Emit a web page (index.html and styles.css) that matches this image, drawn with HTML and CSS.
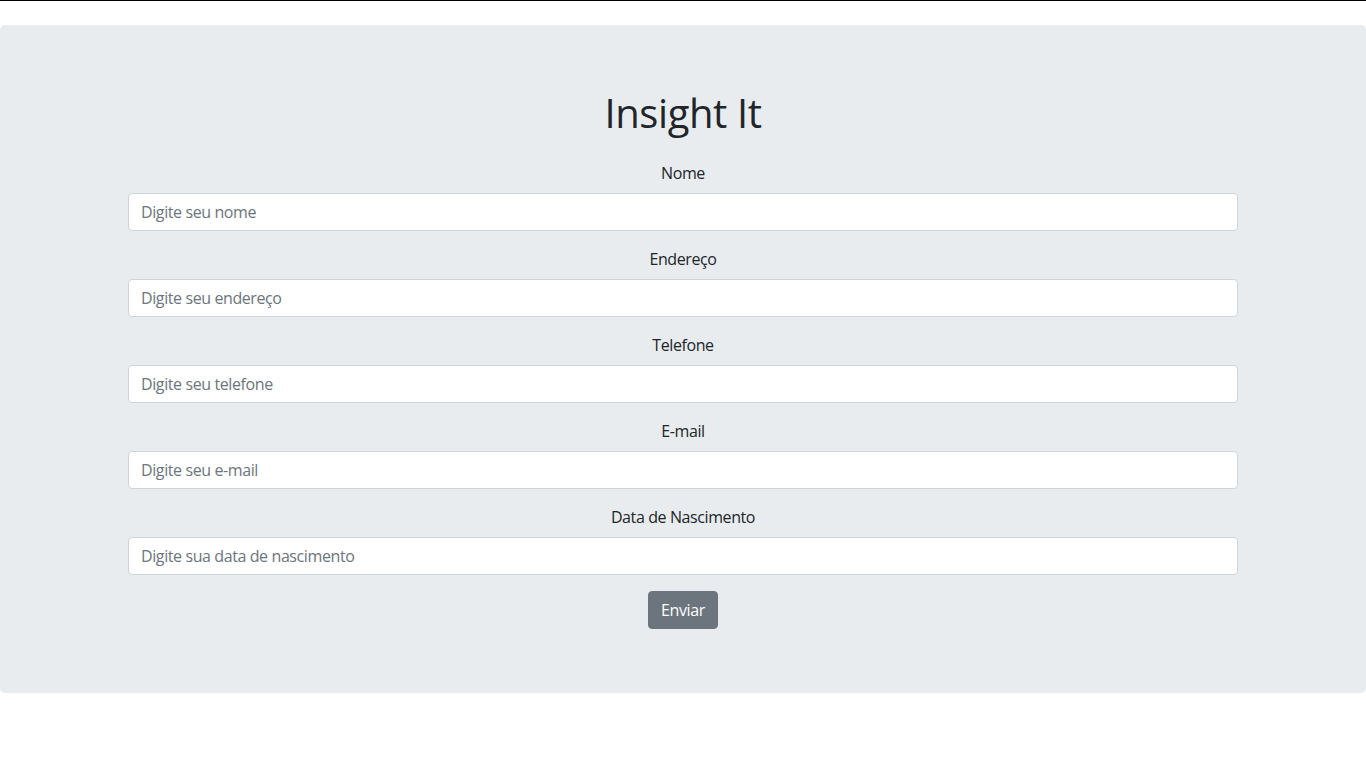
FILE: index.html
```html
<!DOCTYPE html>
<html lang="pt-BR">
<head>
<meta charset="utf-8">
<title>Insight It</title>
<link rel="stylesheet" href="styles.css">
</head>
<body>
<div class="topline"></div>
<main class="jumbotron">
  <div class="container">
    <h1 class="title">Insight It</h1>
    <form class="form">
      <div class="form-group">
        <label for="nome">Nome</label>
        <input id="nome" type="text" placeholder="Digite seu nome">
      </div>
      <div class="form-group">
        <label for="endereco">Endereço</label>
        <input id="endereco" type="text" placeholder="Digite seu endereço">
      </div>
      <div class="form-group">
        <label for="telefone">Telefone</label>
        <input id="telefone" type="text" placeholder="Digite seu telefone">
      </div>
      <div class="form-group">
        <label for="email">E-mail</label>
        <input id="email" type="text" placeholder="Digite seu e-mail">
      </div>
      <div class="form-group">
        <label for="nasc">Data de Nascimento</label>
        <input id="nasc" type="text" placeholder="Digite sua data de nascimento">
      </div>
      <div class="actions">
        <button type="button" class="btn">Enviar</button>
      </div>
    </form>
  </div>
</main>
</body>
</html>
```
FILE: styles.css
```css
* { box-sizing: border-box; }
html, body { margin: 0; padding: 0; }
body {
  font-family: "Open Sans", "Noto Sans", sans-serif;
  font-size: 16px;
  line-height: 1.5;
  letter-spacing: -0.4px;
  color: #212529;
  background: #fff;
}
.topline {
  height: 1px;
  background: #000;
  margin-bottom: 24px;
}
.jumbotron {
  background: #e9ecef;
  border-radius: 5px;
  padding: 64px 32px;
  margin-bottom: 32px;
}
.container {
  width: 1140px;
  margin: 0 auto;
  padding: 0 15px;
}
.title {
  font-size: 40px;
  font-weight: 400;
  line-height: 48px;
  letter-spacing: -0.4px;
  margin: 0 0 24px;
  text-align: center;
}
.form-group {
  display: flex;
  flex-direction: column;
  margin-bottom: 16px;
}
.form-group label {
  text-align: center;
  margin-bottom: 8px;
  line-height: 24px;
}
.form-group input {
  height: 38px;
  padding: 6px 12px;
  font: inherit;
  letter-spacing: inherit;
  color: #495057;
  background: #fff;
  border: 1px solid #ced4da;
  border-radius: 4px;
}
.form-group input::placeholder { color: #6c757d; opacity: 1; }
.actions { display: flex; justify-content: center; }
.btn {
  font: inherit;
  letter-spacing: inherit;
  line-height: 24px;
  height: 38px;
  padding: 6px 12px;
  color: #fff;
  background: #6c757d;
  border: 1px solid #6c757d;
  border-radius: 4px;
}
```
